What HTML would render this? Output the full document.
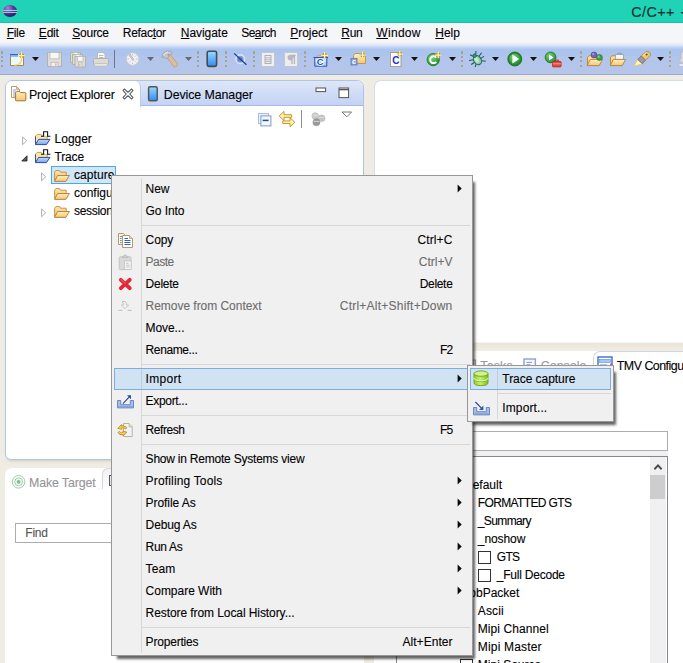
<!DOCTYPE html>
<html><head><meta charset="utf-8"><title>C/C++ - Eclipse</title>
<style>
html,body{margin:0;padding:0}
body{width:683px;height:663px;overflow:hidden;position:relative;background:#EFEDE3;font-family:"Liberation Sans",sans-serif;font-size:12px}
div,span,svg{position:absolute;box-sizing:border-box}
.t{white-space:nowrap;line-height:16px;height:16px;-webkit-text-stroke:0.1px currentColor}
u{text-decoration:underline;text-underline-offset:1px}
#title{left:0;top:0;width:683px;height:23px;background:#20D3B6}
#menubar{left:0;top:23px;width:683px;height:19px;background:#F5F6F7}
#toolbar{left:0;top:42px;width:683px;height:33px;background:linear-gradient(#F0F3FB 0px,#E3E9F8 3px,#C4D5F3 5px,#ABC5EF 7.5px,#AAC4EE 12px,#B3C5EC 15px,#B6C6EA 32px);border-bottom:1px solid #98A8D4}
/* panels */
#pe{left:5px;top:80px;width:359px;height:380px;background:#fff;border:1px solid #B2C2EA;border-radius:7px 7px 6px 6px;overflow:hidden;box-shadow:0 3px 3px -2px rgba(140,130,90,.3)}
#pehead{left:0;top:0;width:357px;height:25px;background:linear-gradient(#DEE7F9,#C3D3F4);border-bottom:1px solid #A7B9E6}
#petab{left:0;top:0;width:135px;height:26px;background:#fff;border-right:1px solid #B9C9EC;border-radius:0 6px 0 0}
#ed{left:374px;top:80px;width:320px;height:263px;background:#fff;border:1px solid #D3DCF0;border-bottom-color:#F4F4F2;border-radius:7px 0 0 0}
#mt{left:5px;top:468px;width:359px;height:210px;background:#fff;border-radius:7px 7px 0 0}
#br{left:374px;top:351px;width:320px;height:330px;background:#fff}
#brhead{left:0;top:0;width:320px;height:25px;background:linear-gradient(#fff 60%,#F6F6F6)}
#brtab{left:219px;top:0;width:120px;height:26px;background:#fff;border:1px solid #D0D5E2;border-bottom:none;border-radius:7px 0 0 0}
.inp{background:#fff;border:1px solid #ABADB3}
/* menus */
.menu{background:#F0F0F0;border:1px solid #979797;box-shadow:4px 5px 2.5px -2px rgba(0,0,0,.62)}
.sep{height:1px;background:#D7D7D7}
.gut{width:1px;background:#D7D7D7}
.hl{background:#D1E2F2;border:1px solid #78AEE5}
.arr{left:457px;width:0;height:0;border-left:4.3px solid #111;border-top:3.7px solid transparent;border-bottom:3.7px solid transparent}
.dd{width:0;height:0;border-top:4px solid #111;border-left:4px solid transparent;border-right:4px solid transparent}
.hd{width:2px;height:2px;background:#A9A28C}
.cb{width:13px;height:13px;background:#fff;border:1px solid #333}

</style></head>
<body>
<div id="title"></div><div style="left:0;top:22px;width:683px;height:1px;background:#1BC2A6"></div>
<svg style="left:2px;top:4px" width="16" height="14" viewBox="0 0 16 14"><defs><radialGradient id="eg" cx="0.35" cy="0.25" r="0.8"><stop offset="0" stop-color="#9C8CD2"/><stop offset="0.5" stop-color="#4A3C96"/><stop offset="1" stop-color="#241A6A"/></radialGradient></defs><ellipse cx="8" cy="7" rx="7.1" ry="6" fill="url(#eg)"/><path d="M1.2 4.6Q0.6 7 1.4 9.4" fill="none" stroke="#E88CB4" stroke-width="0.9" stroke-opacity="0.8"/><rect x="1.3" y="5.9" width="13.9" height="1" fill="#C2C9EE"/><rect x="1.3" y="7.9" width="13.9" height="1" fill="#C2C9EE"/></svg>
<div id="menubar"></div>
<div id="toolbar"></div>
<svg width="0" height="0" style="left:0;top:0"><defs>
<linearGradient id="gBlue" x1="0" y1="0" x2="0" y2="1"><stop offset="0" stop-color="#9AD8FF"/><stop offset="1" stop-color="#2E8CF2"/></linearGradient>
<linearGradient id="gFold" x1="0" y1="0" x2="0" y2="1"><stop offset="0" stop-color="#FEF0C4"/><stop offset="1" stop-color="#F3C673"/></linearGradient>
<linearGradient id="gFoldB" x1="0" y1="0" x2="0" y2="1"><stop offset="0" stop-color="#FCE7B2"/><stop offset="1" stop-color="#F0BF68"/></linearGradient>
<linearGradient id="gFlap" x1="0" y1="0" x2="0" y2="1"><stop offset="0" stop-color="#C4DBFA"/><stop offset="1" stop-color="#79A6E8"/></linearGradient>
<radialGradient id="gGreen" cx="0.4" cy="0.35" r="0.7"><stop offset="0" stop-color="#7FD27A"/><stop offset="1" stop-color="#1E8A2A"/></radialGradient>
<linearGradient id="gDb" x1="0" y1="0" x2="1" y2="0"><stop offset="0" stop-color="#8CCB2E"/><stop offset="0.45" stop-color="#C6F070"/><stop offset="1" stop-color="#7DBE22"/></linearGradient>
</defs></svg>
<div class="hd" style="left:1px;top:51px;height:3px"></div><div class="hd" style="left:1px;top:56px;height:2px"></div><div class="hd" style="left:1px;top:60px;height:2px"></div><div class="hd" style="left:1px;top:65px;height:2px"></div>
<svg style="left:9px;top:51px" width="17" height="16" viewBox="0 0 17 16"><path d="M1.5 3.2V14.5H14.5V3.2" fill="#ECFAFF" stroke="#A88A44" stroke-width="1"/><rect x="1" y="3" width="8" height="1.4" fill="#2C68C4"/><rect x="1" y="4.4" width="8" height="1.3" fill="#6FA6EA"/><path d="M12.6 7.5C12.6 12 9.5 14.2 5.5 14.4" fill="none" stroke="#F6CE58" stroke-width="1.1"/><path d="M12.5 1.2000000000000002L15.8 4.5L12.5 7.8L9.2 4.5Z" fill="#C28E14"/><path d="M12.5 1.2000000000000002V7.8M9.2 4.5H15.8" stroke="#FFF4B4" stroke-width="1.25"/></svg>
<svg style="left:32px;top:57px" width="7" height="4" viewBox="0 0 7 4"><path d="M0 0H7L3.5 4Z" fill="#111"/></svg>
<svg style="left:46px;top:51px" width="17" height="17" viewBox="0 0 17 17"><path d="M1.5 1.5h14v14h-14z" fill="#DFDDD8" stroke="#B3B1AA"/><rect x="4.0" y="1.5" width="9" height="6.3" fill="#F8F8F6" stroke="#BEBCB5" stroke-width="0.8"/><rect x="5.0" y="11.3" width="7" height="4.2" fill="#F3F2EE" stroke="#B9B7B0" stroke-width="0.8"/><rect x="9.0" y="12.3" width="1.6" height="2.6" fill="#C9C7C0"/></svg>
<svg style="left:69px;top:51px" width="18" height="17" viewBox="0 0 18 17"><path d="M1.5 1.5h10v10h-10z" fill="#DFDDD8" stroke="#B3B1AA"/><rect x="4.0" y="1.5" width="5" height="4.5" fill="#F8F8F6" stroke="#BEBCB5" stroke-width="0.8"/><rect x="5.0" y="7.3" width="3" height="4.2" fill="#F3F2EE" stroke="#B9B7B0" stroke-width="0.8"/><rect x="5.0" y="8.3" width="1.6" height="2.6" fill="#C9C7C0"/><path d="M3.5 3.5h10v10h-10z" fill="#DFDDD8" stroke="#B3B1AA"/><rect x="6.0" y="3.5" width="5" height="4.5" fill="#F8F8F6" stroke="#BEBCB5" stroke-width="0.8"/><rect x="7.0" y="9.3" width="3" height="4.2" fill="#F3F2EE" stroke="#B9B7B0" stroke-width="0.8"/><rect x="7.0" y="10.3" width="1.6" height="2.6" fill="#C9C7C0"/><path d="M6 5.5h10.5v10.5h-10.5z" fill="#DFDDD8" stroke="#B3B1AA"/><rect x="8.5" y="5.5" width="5.5" height="4.7250000000000005" fill="#F8F8F6" stroke="#BEBCB5" stroke-width="0.8"/><rect x="9.5" y="11.8" width="3.5" height="4.2" fill="#F3F2EE" stroke="#B9B7B0" stroke-width="0.8"/><rect x="10.0" y="12.8" width="1.6" height="2.6" fill="#C9C7C0"/></svg>
<svg style="left:92px;top:51px" width="18" height="17" viewBox="0 0 18 17"><path d="M5.5 8V1.5H11L13 3.5V8Z" fill="#FCFCFA" stroke="#B9B7B0" stroke-width="0.9"/><path d="M7 4.5h4.4M7 6.5h4.4" stroke="#B4B2AC" stroke-width="0.9"/><rect x="1.5" y="7.5" width="15" height="6" rx="1.2" fill="#DDDBD5" stroke="#B3B1AA"/><rect x="2.6" y="12.6" width="12.8" height="2.6" rx="0.8" fill="#EDECE8" stroke="#B9B7B0" stroke-width="0.8"/></svg>
<div style="left:114px;top:50px;width:1px;height:18px;background:#6E7488"></div>
<svg style="left:125px;top:51px" width="16" height="16" viewBox="0 0 16 16"><circle cx="7.6" cy="8" r="6.3" fill="#F1F1F4" stroke="#C9CAD2" stroke-width="1"/><path d="M7.6 3v1.4M7.6 11.6V13M2.6 8H4M11.2 8h1.4M4.2 4.6l1 1M10 10.4l1 1M11 4.6l-1 1M4.2 11.4l1-1" stroke="#B5B6BE" stroke-width="0.9"/><path d="M4.4 3.4L8.6 9.4" stroke="#A9AAB3" stroke-width="1.9"/><path d="M4.7 3.8L8.3 9" stroke="#EDEDF0" stroke-width="0.7"/></svg>
<svg style="left:147px;top:57px" width="7" height="4" viewBox="0 0 7 4"><path d="M0 0H7L3.5 4Z" fill="#666A78"/></svg>
<svg style="left:161px;top:50px" width="18" height="18" viewBox="0 0 18 18"><path d="M5.6 6.8L9.2 4.4L16.4 13.6Q17 16 15 16.8L12.6 16.6Z" fill="#DDBD98" stroke="#B8946A" stroke-width="0.7"/><path d="M0.8 7Q1.4 2.6 6.4 1Q10 0.4 11.4 2.6L9.4 5Q8 3.8 6.6 4.8L8 6.6L5 9L3.4 6.8Q2.2 6.6 1.6 8Z" fill="#C6C9D1" stroke="#9497A2" stroke-width="0.7"/><path d="M2.4 5Q4 2.6 7 2" fill="none" stroke="#ECEEF2" stroke-width="1"/></svg>
<svg style="left:185px;top:57px" width="7" height="4" viewBox="0 0 7 4"><path d="M0 0H7L3.5 4Z" fill="#666A78"/></svg>
<div class="hd" style="left:197px;top:51px;height:3px"></div><div class="hd" style="left:197px;top:56px;height:2px"></div><div class="hd" style="left:197px;top:60px;height:2px"></div><div class="hd" style="left:197px;top:65px;height:2px"></div>
<svg style="left:206px;top:50px" width="12" height="18" viewBox="0 0 12 18"><rect x="1.2" y="1.2" width="9.4" height="15.2" rx="1.6" fill="url(#gBlue)" stroke="#4A4A4E" stroke-width="1.6"/></svg>
<div class="hd" style="left:225px;top:51px;height:3px"></div><div class="hd" style="left:225px;top:56px;height:2px"></div><div class="hd" style="left:225px;top:60px;height:2px"></div><div class="hd" style="left:225px;top:65px;height:2px"></div>
<svg style="left:233px;top:52px" width="15" height="14" viewBox="0 0 15 14"><circle cx="7.2" cy="7.2" r="4.3" fill="#7F9FD6" stroke="#D9E2F4" stroke-width="1.6"/><circle cx="7.2" cy="7.2" r="2.2" fill="#5C82C4"/><path d="M1.2 1.4L13.4 12.8" stroke="#1C3FA0" stroke-width="1.3"/></svg>
<div class="hd" style="left:253px;top:51px;height:3px"></div><div class="hd" style="left:253px;top:56px;height:2px"></div><div class="hd" style="left:253px;top:60px;height:2px"></div><div class="hd" style="left:253px;top:65px;height:2px"></div>
<svg style="left:261px;top:52px" width="14" height="15" viewBox="0 0 14 15"><rect x="0.5" y="0.5" width="13" height="14" fill="#F0F0F2" stroke="#C6C7CE"/><rect x="4" y="3.5" width="6" height="8" fill="none" stroke="#A9AAB2" stroke-width="0.9"/><path d="M4 5.8h6M4 7.8h6M4 9.6h6" stroke="#A9AAB2" stroke-width="0.8"/></svg>
<svg style="left:284px;top:52px" width="14" height="15" viewBox="0 0 14 15"><rect x="0.5" y="0.5" width="13" height="14" fill="#EDEDEF" stroke="#C6C7CE"/><path d="M8 3.2V12M10.4 3.2V12M11.6 3.4H7Q4.2 3.4 4.2 5.6Q4.2 7.8 7.4 7.8" fill="#B9BAC1" stroke="#B4B5BC" stroke-width="1.3"/></svg>
<div class="hd" style="left:304px;top:51px;height:3px"></div><div class="hd" style="left:304px;top:56px;height:2px"></div><div class="hd" style="left:304px;top:60px;height:2px"></div><div class="hd" style="left:304px;top:65px;height:2px"></div>
<svg style="left:313px;top:51px" width="16" height="16" viewBox="0 0 16 16"><path d="M3.6 6.2L4.4 4.4H8L8.8 6.2Z" fill="#F2C2A8" stroke="#C08A78" stroke-width="0.6"/><path d="M0.7 6.5H15L13.8 7.6V15.2H1.8V7.6Z" fill="#A9CDF8" stroke="#2A52C0" stroke-width="1"/><path d="M2.6 8H13V11H2.6Z" fill="#CDE4FF"/><text x="7.2" y="14.3" font-family="Liberation Sans,sans-serif" font-size="9.5" font-weight="bold" fill="#fff" stroke="#fff" stroke-width="1.6" text-anchor="middle">C</text><text x="7.2" y="14.3" font-family="Liberation Sans,sans-serif" font-size="9.5" font-weight="bold" fill="#185AA8" text-anchor="middle">C</text><path d="M11.6 1.1000000000000005L14.899999999999999 4.4L11.6 7.7L8.3 4.4Z" fill="#C28E14"/><path d="M11.6 1.1000000000000005V7.7M8.3 4.4H14.899999999999999" stroke="#FFF4B4" stroke-width="1.25"/></svg>
<svg style="left:335px;top:57px" width="7" height="4" viewBox="0 0 7 4"><path d="M0 0H7L3.5 4Z" fill="#111"/></svg>
<svg style="left:350px;top:51px" width="17" height="16" viewBox="0 0 17 16"><path d="M3.5 4.5L5 2.5H9.5L10.5 4H15.5V12.5H3.5Z" fill="url(#gFold)" stroke="#C0903C" stroke-width="0.9"/><rect x="1" y="7.5" width="6" height="6.5" fill="#86A6DE" stroke="#5878BC" stroke-width="0.8"/><text x="4" y="13" font-family="Liberation Sans,sans-serif" font-size="7" font-weight="bold" fill="#fff" text-anchor="middle">c</text><path d="M12.6 0.7999999999999998L15.8 4L12.6 7.2L9.399999999999999 4Z" fill="#C28E14"/><path d="M12.6 0.7999999999999998V7.2M9.399999999999999 4H15.8" stroke="#FFF4B4" stroke-width="1.25"/></svg>
<svg style="left:373px;top:57px" width="7" height="4" viewBox="0 0 7 4"><path d="M0 0H7L3.5 4Z" fill="#111"/></svg>
<svg style="left:389px;top:50px" width="15" height="18" viewBox="0 0 15 18"><rect x="1.5" y="2.5" width="10.5" height="14" fill="#FAFAFF" stroke="#A9A090"/><text x="6.8" y="14" font-family="Liberation Sans,sans-serif" font-size="10" font-weight="bold" fill="#2334B8" text-anchor="middle">C</text><path d="M10.8 0.7999999999999998L14.0 4L10.8 7.2L7.6000000000000005 4Z" fill="#C28E14"/><path d="M10.8 0.7999999999999998V7.2M7.6000000000000005 4H14.0" stroke="#FFF4B4" stroke-width="1.25"/></svg>
<svg style="left:411px;top:57px" width="7" height="4" viewBox="0 0 7 4"><path d="M0 0H7L3.5 4Z" fill="#111"/></svg>
<svg style="left:426px;top:51px" width="16" height="16" viewBox="0 0 16 16"><circle cx="7.2" cy="8.6" r="6.2" fill="url(#gGreen)" stroke="#1F7A2A" stroke-width="0.8"/><path d="M10.2 6.6A3.4 3.4 0 1 0 10.2 10.8" fill="none" stroke="#fff" stroke-width="2"/><path d="M12.2 0.7999999999999998L15.399999999999999 4L12.2 7.2L9.0 4Z" fill="#C28E14"/><path d="M12.2 0.7999999999999998V7.2M9.0 4H15.399999999999999" stroke="#FFF4B4" stroke-width="1.25"/></svg>
<svg style="left:448.5px;top:57px" width="7" height="4" viewBox="0 0 7 4"><path d="M0 0H7L3.5 4Z" fill="#111"/></svg>
<div class="hd" style="left:461px;top:51px;height:3px"></div><div class="hd" style="left:461px;top:56px;height:2px"></div><div class="hd" style="left:461px;top:60px;height:2px"></div><div class="hd" style="left:461px;top:65px;height:2px"></div>
<svg style="left:469px;top:51px" width="17" height="16" viewBox="0 0 17 16"><g transform="rotate(-32 8 8.4)"><path d="M4.5 0.8L6.4 3.6M11.5 0.8L9.6 3.6M0.6 5.2L4.6 6.8M15.4 5.2L11.4 6.8M0.4 9.6H4.2M15.6 9.6H11.8M1.6 14.6L5 11.8M14.4 14.6L11 11.8" stroke="#1F5A52" stroke-width="1.05" fill="none"/><ellipse cx="8" cy="9.2" rx="3.7" ry="4.9" fill="#8CCBA8" stroke="#1E6458" stroke-width="1"/><ellipse cx="7.4" cy="8.6" rx="1.9" ry="3" fill="#C4EACC"/><circle cx="8" cy="4" r="1.8" fill="#3E8C7C" stroke="#1E6458" stroke-width="0.8"/></g></svg>
<svg style="left:492px;top:57px" width="7" height="4" viewBox="0 0 7 4"><path d="M0 0H7L3.5 4Z" fill="#111"/></svg>
<svg style="left:507px;top:51px" width="16" height="16" viewBox="0 0 16 16"><circle cx="7.8" cy="8" r="7" fill="#1F8A2C" stroke="#176A22" stroke-width="0.8"/><circle cx="7.8" cy="8" r="5.6" fill="url(#gGreen)"/><path d="M5.4 3.4L12.2 8L5.4 12.6Z" fill="#fff"/></svg>
<svg style="left:530px;top:57px" width="7" height="4" viewBox="0 0 7 4"><path d="M0 0H7L3.5 4Z" fill="#111"/></svg>
<svg style="left:544px;top:51px" width="18" height="17" viewBox="0 0 18 17"><circle cx="6.6" cy="6.4" r="5.4" fill="url(#gGreen)" stroke="#1B7526" stroke-width="0.9"/><path d="M5 3.4L9.6 6.4L5 9.6Z" fill="#fff"/><rect x="8.5" y="10.5" width="8.6" height="5.4" rx="0.8" fill="#E0483C" stroke="#B02A20" stroke-width="0.8"/><path d="M11 10.4V9.2H14.6V10.4" fill="none" stroke="#B02A20" stroke-width="1"/><path d="M8.6 12.8H17" stroke="#F6B0A8" stroke-width="0.8"/></svg>
<svg style="left:568px;top:57px" width="7" height="4" viewBox="0 0 7 4"><path d="M0 0H7L3.5 4Z" fill="#111"/></svg>
<div class="hd" style="left:580px;top:51px;height:3px"></div><div class="hd" style="left:580px;top:56px;height:2px"></div><div class="hd" style="left:580px;top:60px;height:2px"></div><div class="hd" style="left:580px;top:65px;height:2px"></div>
<svg style="left:586px;top:50px" width="18" height="17" viewBox="0 0 18 17"><path d="M1.5 15V7.2L3 5.8H7L8 7.2H13.6V9" fill="url(#gFoldB)" stroke="#B8802E" stroke-width="0.9"/><path d="M4.4 9.4H16.6L13.2 15.6H1.2Z" fill="url(#gFold)" stroke="#B8802E" stroke-width="0.9"/><circle cx="8" cy="5" r="3" fill="#7A5FC0" stroke="#4B3890" stroke-width="0.6"/><circle cx="7.2" cy="4.2" r="1.1" fill="#A896DC"/><circle cx="13.4" cy="7.5" r="3" fill="#3FA048" stroke="#1F7028" stroke-width="0.6"/><circle cx="12.6" cy="6.7" r="1.1" fill="#86CE8C"/></svg>
<svg style="left:609px;top:51px" width="18" height="16" viewBox="0 0 18 16"><path d="M1.5 13.5V6.2L3 4.8H7L8 6.2H13.6V8" fill="url(#gFoldB)" stroke="#B8802E" stroke-width="0.9"/><path d="M8.6 3.4V2.2H12.4V3.4" fill="none" stroke="#8C98A8" stroke-width="0.9"/><rect x="6.6" y="3.5" width="7.8" height="5" fill="#F6F8FF" stroke="#98A4BC" stroke-width="0.9"/><path d="M4.4 8.4H16.6L13.2 14.6H1.2Z" fill="url(#gFold)" stroke="#B8802E" stroke-width="0.9"/></svg>
<svg style="left:633px;top:50px" width="19" height="18" viewBox="0 0 19 18"><path d="M1 15.9L4.8 9.6L9.6 14Z" fill="#FFF6B8" stroke="#EEC85A" stroke-width="0.8"/><path d="M4.8 9.4L8.4 5.8L12.6 10L9.4 13.8Z" fill="#9A9AA2" stroke="#6A6A74" stroke-width="0.8"/><path d="M8.4 5.8L13.2 1.6Q15 0.9 16.6 2.4Q18 4.2 17.2 5.8L12.6 10Z" fill="#F3C56C" stroke="#B8802E" stroke-width="0.8"/><path d="M10 5.6L13.8 2.4" stroke="#FBE2A8" stroke-width="1.2"/><circle cx="13.6" cy="4.6" r="1" fill="#2F55C0"/></svg>
<svg style="left:657px;top:57px" width="7" height="4" viewBox="0 0 7 4"><path d="M0 0H7L3.5 4Z" fill="#111"/></svg>
<div class="hd" style="left:669px;top:51px;height:3px"></div><div class="hd" style="left:669px;top:56px;height:2px"></div><div class="hd" style="left:669px;top:60px;height:2px"></div><div class="hd" style="left:669px;top:65px;height:2px"></div>
<svg style="left:678px;top:51px" width="6" height="17" viewBox="0 0 6 17"><path d="M3 1H9V8H12L6 13.6L0.4 8H3Z" fill="#DDDEE4" stroke="#B9BAC2" stroke-width="0.9"/><rect x="1" y="12.6" width="10" height="3" fill="#E8E8EC" stroke="#B9BAC2" stroke-width="0.8"/></svg>

<div id="pe"><div id="pehead"></div><div id="petab"></div></div>
<div id="ed"></div>
<div id="band" style="left:374px;top:343px;width:309px;height:8px;background:linear-gradient(#E9E5D9,#F1EEE5)"></div>
<div id="mt"></div>
<div style="left:102px;top:468px;width:40px;height:21px;background:linear-gradient(#F1F1F4,#fff);border-left:1px solid #D6D6DE;border-top:1px solid #D6D6DE;border-radius:6px 0 0 0"></div>
<div style="left:108.5px;top:475px;width:8px;height:11px;background:#E8E8EE;border:1.5px solid #55555F"></div>
<div class="inp" style="left:15px;top:523px;width:200px;height:20px"></div>
<div id="br"><div id="brhead"></div><div id="brtab"></div></div>
<div class="inp" style="left:420px;top:431px;width:248px;height:20px"></div>
<div style="left:396px;top:451px;width:272px;height:6px;background:#F0F0F0"></div>
<div class="inp" style="left:396px;top:456px;width:272px;height:230px;border-color:#828790"></div>
<div style="left:650px;top:457px;width:16px;height:210px;background:#F0F0F0"></div>
<div style="left:650px;top:475px;width:15px;height:24px;background:#CDCDCD"></div>
<svg style="left:652.5px;top:463px" width="10" height="8" viewBox="0 0 10 8"><path d="M1.4 6.2 L5 2.4 L8.6 6.2" fill="none" stroke="#4A4A4A" stroke-width="2"/></svg>
<div class="cb" style="left:478px;top:551px"></div>
<div class="cb" style="left:478px;top:569px"></div>
<div class="cb" style="left:460px;top:659px"></div>
<div class="hl" style="left:51px;top:166px;width:65px;height:18px;background:#D1E6F6;border-color:#4CA9E8"></div>
<svg style="left:22px;top:136px" width="6" height="10" viewBox="0 0 6 10"><path d="M0.6 0.9V8.7L4.6 4.8Z" fill="#fff" stroke="#A5A5A5" stroke-width="0.9"/></svg>
<svg style="left:20.5px;top:154.5px" width="7" height="7" viewBox="0 0 7 7"><path d="M6 0.8V6H0.8Z" fill="#595959" stroke="#262626" stroke-width="0.9"/></svg>
<svg style="left:41px;top:172px" width="6" height="10" viewBox="0 0 6 10"><path d="M0.6 0.9V8.7L4.6 4.8Z" fill="#fff" stroke="#A5A5A5" stroke-width="0.9"/></svg>
<svg style="left:41px;top:208px" width="6" height="10" viewBox="0 0 6 10"><path d="M0.6 0.9V8.7L4.6 4.8Z" fill="#fff" stroke="#A5A5A5" stroke-width="0.9"/></svg>
<svg style="left:34px;top:130.5px" width="17" height="15" viewBox="0 0 17 15"><path d="M1.5 12.5V5.2L3.2 3.4H7.2L8.4 5H13.2V8" fill="#FBE6A6" stroke="#B89A5A" stroke-width="0.9"/><path d="M1.5 5.4V13.2" stroke="#3A4FA6" stroke-width="1"/><path d="M4.6 8.4H16L12.4 13.6H1.4Z" fill="url(#gFlap)" stroke="#2D4BA6" stroke-width="1"/><path d="M10 0.9H13.4V5H10Z" fill="#fff"/><path d="M7 5.3H9.6V0.8H13.6V5.3H16.4" fill="none" stroke="#151515" stroke-width="1.1"/></svg>
<svg style="left:34px;top:148.5px" width="17" height="15" viewBox="0 0 17 15"><path d="M1.5 12.5V5.2L3.2 3.4H7.2L8.4 5H13.2V8" fill="#FBE6A6" stroke="#B89A5A" stroke-width="0.9"/><path d="M1.5 5.4V13.2" stroke="#3A4FA6" stroke-width="1"/><path d="M4.6 8.4H16L12.4 13.6H1.4Z" fill="url(#gFlap)" stroke="#2D4BA6" stroke-width="1"/><path d="M10 0.9H13.4V5H10Z" fill="#fff"/><path d="M7 5.3H9.6V0.8H13.6V5.3H16.4" fill="none" stroke="#151515" stroke-width="1.1"/></svg>
<svg style="left:54px;top:170px" width="16" height="12" viewBox="0 0 16 12"><path d="M0.6 10.6V2.2L1.8 0.6H5.6L6.6 2.2H12.2V5.4" fill="url(#gFoldB)" stroke="#BE8A3E" stroke-width="0.9"/><path d="M3.6 5.5H15.4L11.8 11.4H0.6Z" fill="url(#gFold)" stroke="#B9792E" stroke-width="0.9"/></svg>
<svg style="left:54px;top:188px" width="16" height="12" viewBox="0 0 16 12"><path d="M0.6 10.6V2.2L1.8 0.6H5.6L6.6 2.2H12.2V5.4" fill="url(#gFoldB)" stroke="#BE8A3E" stroke-width="0.9"/><path d="M3.6 5.5H15.4L11.8 11.4H0.6Z" fill="url(#gFold)" stroke="#B9792E" stroke-width="0.9"/></svg>
<svg style="left:54px;top:206px" width="16" height="12" viewBox="0 0 16 12"><path d="M0.6 10.6V2.2L1.8 0.6H5.6L6.6 2.2H12.2V5.4" fill="url(#gFoldB)" stroke="#BE8A3E" stroke-width="0.9"/><path d="M3.6 5.5H15.4L11.8 11.4H0.6Z" fill="url(#gFold)" stroke="#B9792E" stroke-width="0.9"/></svg>
<svg style="left:10px;top:85px" width="17" height="17" viewBox="0 0 17 17"><path d="M1.5 1.5H6.5L9.5 4.5V12.5H1.5Z" fill="#FFFEF6" stroke="#A6966A" stroke-width="0.9"/><path d="M6.5 1.5V4.5H9.5Z" fill="#E4D6A6" stroke="#A6966A" stroke-width="0.6"/><path d="M3 5h3M3 7h3.4M3 9h2M3 11h2" stroke="#7C97D6" stroke-width="0.9"/><path d="M5.6 15.2V7.6L6.8 6.4H9.4L10.4 7.6H15Q15.8 7.6 15.8 8.4V15.2Q15.8 15.8 15 15.8H6.4Q5.6 15.8 5.6 15.2Z" fill="url(#gFold)" stroke="#B46E28" stroke-width="1"/></svg>
<svg style="left:122px;top:88px" width="12" height="12" viewBox="0 0 12 12"><path d="M1 2.4L2.4 1L6 4.2L9.6 1L11 2.4L7.8 6L11 9.6L9.6 11L6 7.8L2.4 11L1 9.6L4.2 6Z" fill="#fff" stroke="#5C5C5C" stroke-width="1.05"/></svg>
<svg style="left:147px;top:85px" width="12" height="18" viewBox="0 0 12 18"><rect x="1.6" y="1.8" width="8.6" height="14" rx="1.4" fill="url(#gBlue)" stroke="#56565A" stroke-width="1.5"/></svg>
<svg style="left:315px;top:87px" width="12" height="6" viewBox="0 0 12 6"><rect x="1" y="1" width="9.6" height="3.6" fill="#fff" stroke="#555" stroke-width="1"/></svg>
<svg style="left:338px;top:87px" width="12" height="12" viewBox="0 0 12 12"><rect x="1" y="1" width="9.6" height="9.6" fill="#fff" stroke="#555" stroke-width="1"/><path d="M1 2.6H10.6" stroke="#555" stroke-width="1.4"/></svg>
<svg style="left:257px;top:112px" width="15" height="15" viewBox="0 0 15 15"><rect x="1.5" y="1.5" width="10" height="10" fill="#E8F1FB" stroke="#A9BCE0"/><rect x="3.9" y="3.9" width="10" height="10" fill="#F2F9FE" stroke="#7E97CC"/><path d="M5.6 8.4H11.6" stroke="#1C4A9C" stroke-width="1.5"/></svg>
<svg style="left:278px;top:110px" width="18" height="18" viewBox="0 0 18 18"><path d="M1.2 6L6 1.4V4.7H13.6V7.3H6V10.6Z" fill="#FFF0B4" stroke="#C88A12" stroke-width="0.9"/><path d="M16.8 12.2L12 7.6V10.9H4.8V13.5H12V16.8Z" fill="#FFF0B4" stroke="#C88A12" stroke-width="0.9"/></svg>
<div style="left:301px;top:110px;width:1px;height:18px;background:#8F8F8F"></div>
<svg style="left:311px;top:112px" width="15" height="15" viewBox="0 0 15 15"><circle cx="4.2" cy="4" r="3.3" fill="#CDCDCD" stroke="#B4B4B4" stroke-width="0.6"/><circle cx="10.7" cy="6.3" r="3.3" fill="#C6C6C6" stroke="#B0B0B0" stroke-width="0.6"/><circle cx="5.4" cy="10.2" r="3.5" fill="#9C9C9C" stroke="#888" stroke-width="0.6"/><path d="M2.2 9.4H8.6M1.4 3.2H7M8 5.5H13.4" stroke="#E0E0E0" stroke-width="0.8"/></svg>
<svg style="left:341px;top:111px" width="12" height="7" viewBox="0 0 12 7"><path d="M1 1H10.6L5.8 5.8Z" fill="#fff" stroke="#6A6A6A" stroke-width="0.9"/></svg><svg style="left:11px;top:474px" width="16" height="16" viewBox="0 0 16 16"><circle cx="7.6" cy="7.8" r="6.3" fill="#fff" stroke="#8FC6A0" stroke-width="0.9"/><circle cx="7.6" cy="7.8" r="3.9" fill="#F2FAF4" stroke="#8FC6A0" stroke-width="0.9"/><circle cx="7.6" cy="7.8" r="1.9" fill="#7EBE92"/></svg>
<svg style="left:523px;top:358px" width="14" height="14" viewBox="0 0 14 14"><rect x="1" y="1" width="11.4" height="10.6" fill="#F4F7FD" stroke="#8AA2D6" stroke-width="1.4"/><path d="M3.6 4.4H9M3.6 6.8H7.4" stroke="#8C98B4" stroke-width="1"/></svg>
<svg style="left:470px;top:358px" width="8" height="14" viewBox="0 0 8 14"><rect x="-4" y="2" width="9.6" height="11" fill="#EDE6D2" stroke="#B6A680" stroke-width="1"/><path d="M-2 6H4M-2 8.5H4" stroke="#AAA" stroke-width="0.8"/></svg>
<svg style="left:597px;top:356px" width="17" height="16" viewBox="0 0 17 16"><rect x="1" y="1" width="14" height="12.4" fill="#fff" stroke="#3B6FD0" stroke-width="1.4"/><rect x="2.6" y="3.4" width="10.8" height="3" fill="#A8C6F4" stroke="#5F8CE0" stroke-width="0.6"/><path d="M3 9H10M3 11H9" stroke="#5F8CE0" stroke-width="1"/><circle cx="14.2" cy="8.4" r="1.1" fill="#E23C8C"/></svg>
<span class="t" id="t0" style="font-size:12px;color:#000;top:24.5px;left:6.8px;letter-spacing:-0.340px;"><u>F</u>ile</span>
<span class="t" id="t1" style="font-size:12px;color:#000;top:24.5px;left:38.8px;letter-spacing:-0.176px;"><u>E</u>dit</span>
<span class="t" id="t2" style="font-size:12px;color:#000;top:24.5px;left:72.3px;letter-spacing:-0.258px;"><u>S</u>ource</span>
<span class="t" id="t3" style="font-size:12px;color:#000;top:24.5px;left:122.8px;letter-spacing:-0.297px;">Refac<u>t</u>or</span>
<span class="t" id="t4" style="font-size:12px;color:#000;top:24.5px;left:180.8px;letter-spacing:-0.047px;"><u>N</u>avigate</span>
<span class="t" id="t5" style="font-size:12px;color:#000;top:24.5px;left:241.3px;letter-spacing:-0.591px;">Se<u>a</u>rch</span>
<span class="t" id="t6" style="font-size:12px;color:#000;top:24.5px;left:290.3px;letter-spacing:-0.051px;"><u>P</u>roject</span>
<span class="t" id="t7" style="font-size:12px;color:#000;top:24.5px;left:341.3px;letter-spacing:-0.344px;"><u>R</u>un</span>
<span class="t" id="t8" style="font-size:12px;color:#000;top:24.5px;left:376.3px;letter-spacing:0.302px;"><u>W</u>indow</span>
<span class="t" id="t9" style="font-size:12px;color:#000;top:24.5px;left:435.3px;letter-spacing:-0.047px;"><u>H</u>elp</span>
<span class="t" id="t10" style="font-size:14.5px;color:#14302c;top:3.8px;left:631.3px;letter-spacing:0.3px;word-spacing:1.5px;">C/C++ -</span>
<span class="t" id="t40" style="font-size:12px;color:#000;top:130.5px;left:54.6px;letter-spacing:-0.029px;">Logger</span>
<span class="t" id="t41" style="font-size:12px;color:#000;top:148.5px;left:54.6px;letter-spacing:-0.187px;">Trace</span>
<span class="t" id="t42" style="font-size:12px;color:#000;top:166.5px;left:74px;letter-spacing:0.067px;">capture</span>
<span class="t" id="t43" style="font-size:12px;color:#000;top:184.5px;left:74px;">configuration</span>
<span class="t" id="t44" style="font-size:12px;color:#000;top:202.5px;left:74px;letter-spacing:-0.3px;">sessions</span>
<span class="t" id="t45" style="font-size:12.4px;color:#000;top:86.6px;left:29px;letter-spacing:-0.154px;">Project Explorer</span>
<span class="t" id="t46" style="font-size:12.4px;color:#000;top:86.6px;left:163.8px;letter-spacing:-0.088px;">Device Manager</span>
<span class="t" id="t47" style="font-size:12.4px;color:#959595;top:475.4px;left:29px;letter-spacing:-0.134px;">Make Target</span>
<span class="t" id="t48" style="font-size:12px;color:#555;top:525px;left:25.3px;letter-spacing:-0.211px;">Find</span>
<span class="t" id="t49" style="font-size:12.4px;color:#9a9a9a;top:357.5px;left:480.3px;letter-spacing:0.166px;">Tasks</span>
<span class="t" id="t50" style="font-size:12.4px;color:#9a9a9a;top:357.5px;left:540.8px;letter-spacing:0.004px;">Console</span>
<span class="t" id="t51" style="font-size:12.4px;color:#000;top:357.7px;left:616.8px;letter-spacing:-0.5px;">TMV Configuration</span>
<span class="t" id="t52" style="font-size:12px;color:#000;top:476.5px;left:464px;">Default</span>
<span class="t" id="t53" style="font-size:12px;color:#000;top:494.5px;left:477.8px;letter-spacing:-0.637px;">FORMATTED GTS</span>
<span class="t" id="t54" style="font-size:12px;color:#000;top:512.5px;left:477.8px;letter-spacing:-0.627px;">_Summary</span>
<span class="t" id="t55" style="font-size:12px;color:#000;top:530.5px;left:477.8px;letter-spacing:-0.078px;">_noshow</span>
<span class="t" id="t56" style="font-size:12px;color:#000;top:548.5px;left:496.8px;letter-spacing:-0.700px;">GTS</span>
<span class="t" id="t57" style="font-size:12px;color:#000;top:566.5px;left:496.8px;letter-spacing:-0.227px;">_Full Decode</span>
<span class="t" id="t58" style="font-size:12px;color:#000;top:584.5px;left:463.3px;">JobPacket</span>
<span class="t" id="t59" style="font-size:12px;color:#000;top:602.5px;left:477.8px;letter-spacing:0.131px;">Ascii</span>
<span class="t" id="t60" style="font-size:12px;color:#000;top:620.5px;left:477.8px;letter-spacing:0.079px;">Mipi Channel</span>
<span class="t" id="t61" style="font-size:12px;color:#000;top:638.5px;left:477.8px;letter-spacing:0.180px;">Mipi Master</span>
<span class="t" id="t62" style="font-size:12px;color:#000;top:657px;left:477.8px;">Mipi Source</span>

<div class="menu" style="left:111px;top:175px;width:362px;height:481px"></div>
<div class="gut" style="left:141px;top:178px;height:475px"></div>
<div class="sep" style="left:142px;top:225px;width:328px"></div>
<div class="sep" style="left:142px;top:364px;width:328px"></div>
<div class="sep" style="left:142px;top:415px;width:328px"></div>
<div class="sep" style="left:142px;top:444px;width:328px"></div>
<div class="sep" style="left:142px;top:627px;width:328px"></div>
<div class="hl" style="left:114px;top:368px;width:356px;height:22px"></div>
<div style="left:141px;top:369px;width:1px;height:20px;background:#BCCDE0"></div>
<svg style="left:456.5px;top:184px" width="6" height="9" viewBox="0 0 6 9"><path d="M0.6 0.4L4.7 4.5L0.6 8.6Z" fill="#0c0c0c"/></svg><svg style="left:456.5px;top:374px" width="6" height="9" viewBox="0 0 6 9"><path d="M0.6 0.4L4.7 4.5L0.6 8.6Z" fill="#0c0c0c"/></svg><svg style="left:456.5px;top:476px" width="6" height="9" viewBox="0 0 6 9"><path d="M0.6 0.4L4.7 4.5L0.6 8.6Z" fill="#0c0c0c"/></svg><svg style="left:456.5px;top:498px" width="6" height="9" viewBox="0 0 6 9"><path d="M0.6 0.4L4.7 4.5L0.6 8.6Z" fill="#0c0c0c"/></svg><svg style="left:456.5px;top:520px" width="6" height="9" viewBox="0 0 6 9"><path d="M0.6 0.4L4.7 4.5L0.6 8.6Z" fill="#0c0c0c"/></svg><svg style="left:456.5px;top:542px" width="6" height="9" viewBox="0 0 6 9"><path d="M0.6 0.4L4.7 4.5L0.6 8.6Z" fill="#0c0c0c"/></svg><svg style="left:456.5px;top:564px" width="6" height="9" viewBox="0 0 6 9"><path d="M0.6 0.4L4.7 4.5L0.6 8.6Z" fill="#0c0c0c"/></svg><svg style="left:456.5px;top:586px" width="6" height="9" viewBox="0 0 6 9"><path d="M0.6 0.4L4.7 4.5L0.6 8.6Z" fill="#0c0c0c"/></svg>
<svg style="left:117px;top:232px" width="17" height="17" viewBox="0 0 17 17"><path d="M1.5 1.5H6.5L8.5 3.5V12.5H1.5Z" fill="#FBF7E4" stroke="#A39460" stroke-width="0.9"/><path d="M3 4.5H6M3 6.5H4.6M3 8.5H4.6M3 10.5H4.6" stroke="#6C8AD0" stroke-width="1"/><path d="M5.5 3.5H12.5L15.5 6.5V15.5H5.5Z" fill="#FEFEFA" stroke="#A39460" stroke-width="0.9"/><path d="M12.5 3.5V6.5H15.5" fill="#E8DEB8" stroke="#A39460" stroke-width="0.7"/><path d="M7.5 6.5H11M7.5 8.5H13.5M7.5 10.5H13.5M7.5 12.5H13.5" stroke="#3C5FB8" stroke-width="1"/></svg>
<svg style="left:118px;top:254px" width="15" height="17" viewBox="0 0 15 17"><rect x="1.2" y="2.8" width="11.8" height="12.8" rx="1" fill="#D9D9D9" stroke="#C2C2C2" stroke-width="0.9"/><path d="M4.4 3.6V2.2H5.8Q6 0.8 7.1 0.8Q8.2 0.8 8.4 2.2H9.8V3.6Z" fill="#CFCFCF" stroke="#B9B9B9" stroke-width="0.7"/><rect x="6.6" y="7" width="6.6" height="8.6" fill="#F4F4F4" stroke="#C4C4C4" stroke-width="0.8"/><path d="M8 9.4H10.6M8 11.2H11.8M8 13H11.8" stroke="#C0C0C0" stroke-width="0.8"/></svg>
<svg style="left:118px;top:277px" width="15" height="14" viewBox="0 0 15 14"><path d="M2.9 2.9L11.7 11.1M11.7 2.9L2.9 11.1" stroke="#E3263A" stroke-width="3.9" stroke-linecap="round"/><path d="M3 2.6L7 6.4" stroke="#F4707C" stroke-width="1" stroke-linecap="round"/></svg>
<svg style="left:117px;top:300px" width="16" height="12" viewBox="0 0 16 12"><path d="M5.6 1.2Q9 0.8 9.4 3.6V5H11.6L8 8.6L4.4 5H6.6V3.6Q6.6 3 5.6 3Z" fill="#F4F4F4" stroke="#BDBDBD" stroke-width="0.9"/><path d="M1.4 10.4H5.4M10.6 10.4H14.6" stroke="#BDBDBD" stroke-width="1"/></svg>
<svg style="left:116px;top:393px" width="19" height="16" viewBox="0 0 19 16"><path d="M1.5 7.5h3.2v4.2h9.6v-4.2h3.2v7.4h-16z" fill="#A9BEE6" stroke="#5F80C0" stroke-width="0.9"/><path d="M2.5 13.4h14" stroke="#7F9AD4" stroke-width="0.8"/><path d="M7 10.6L14 3.2" stroke="#2A3F9C" stroke-width="1.1"/><path d="M11 2.2H15V6.2Z" fill="#2A4FA8"/></svg>
<svg style="left:117px;top:422px" width="17" height="16" viewBox="0 0 17 16"><path d="M6.5 1.5H12L15.2 4.8V14.5H6.5Z" fill="#EEF4FC" stroke="#B4AC8C" stroke-width="0.9"/><path d="M12 1.5V4.8H15.2" fill="#E4DCB8" stroke="#B4AC8C" stroke-width="0.7"/><path d="M9.4 6.6Q7 3.4 3.6 5" fill="none" stroke="#C08A1A" stroke-width="2.6"/><path d="M0.8 6.2L4.6 2.6L5 7.4Z" fill="#F2C84C" stroke="#C08A1A" stroke-width="0.8"/><path d="M9.2 6.4Q7 3.8 3.8 5.2" fill="none" stroke="#F8DC70" stroke-width="1.1"/><path d="M1.4 9.8Q3.8 13 7.2 11.4" fill="none" stroke="#C08A1A" stroke-width="2.6"/><path d="M10 10.2L6.2 13.8L5.8 9Z" fill="#F2C84C" stroke="#C08A1A" stroke-width="0.8"/><path d="M1.6 10Q3.8 12.6 7 11.2" fill="none" stroke="#F8DC70" stroke-width="1.1"/></svg>
<span class="t" id="t11" style="font-size:12px;color:#000;top:180.5px;left:145.6px;letter-spacing:-0.039px;">New</span>
<span class="t" id="t12" style="font-size:12px;color:#000;top:202.5px;left:145.6px;letter-spacing:-0.080px;">Go Into</span>
<span class="t" id="t13" style="font-size:12px;color:#000;top:231.5px;left:145.6px;letter-spacing:-0.129px;">Copy</span>
<span class="t" id="t14" style="font-size:12px;color:#000;top:231.5px;right:230.5px;letter-spacing:0.109px;">Ctrl+C</span>
<span class="t" id="t15" style="font-size:12px;color:#6d6d6d;top:253.5px;left:145.6px;letter-spacing:-0.517px;">Paste</span>
<span class="t" id="t16" style="font-size:12px;color:#6d6d6d;top:253.5px;right:230.5px;letter-spacing:0.002px;">Ctrl+V</span>
<span class="t" id="t17" style="font-size:12px;color:#000;top:275.5px;left:145.6px;letter-spacing:-0.265px;">Delete</span>
<span class="t" id="t18" style="font-size:12px;color:#000;top:275.5px;right:230.5px;letter-spacing:-0.315px;">Delete</span>
<span class="t" id="t19" style="font-size:12px;color:#6d6d6d;top:297.5px;left:145.6px;letter-spacing:-0.038px;">Remove from Context</span>
<span class="t" id="t20" style="font-size:12px;color:#6d6d6d;top:297.5px;right:230.5px;letter-spacing:0.227px;">Ctrl+Alt+Shift+Down</span>
<span class="t" id="t21" style="font-size:12px;color:#000;top:319.5px;left:145.6px;letter-spacing:-0.080px;">Move...</span>
<span class="t" id="t22" style="font-size:12px;color:#000;top:341.5px;left:145.6px;letter-spacing:-0.395px;">Rename...</span>
<span class="t" id="t23" style="font-size:12px;color:#000;top:341.5px;right:230.5px;letter-spacing:-0.700px;">F2</span>
<span class="t" id="t24" style="font-size:12px;color:#000;top:370.5px;left:145.6px;letter-spacing:0.297px;">Import</span>
<span class="t" id="t25" style="font-size:12px;color:#000;top:392.5px;left:145.6px;letter-spacing:-0.321px;">Export...</span>
<span class="t" id="t26" style="font-size:12px;color:#000;top:421.5px;left:145.6px;letter-spacing:-0.462px;">Refresh</span>
<span class="t" id="t27" style="font-size:12px;color:#000;top:421.5px;right:230.5px;letter-spacing:-0.700px;">F5</span>
<span class="t" id="t28" style="font-size:12px;color:#000;top:450.5px;left:145.6px;letter-spacing:-0.220px;">Show in Remote Systems view</span>
<span class="t" id="t29" style="font-size:12px;color:#000;top:472.5px;left:145.6px;letter-spacing:0.161px;">Profiling Tools</span>
<span class="t" id="t30" style="font-size:12px;color:#000;top:494.5px;left:145.6px;letter-spacing:-0.070px;">Profile As</span>
<span class="t" id="t31" style="font-size:12px;color:#000;top:516.5px;left:145.6px;letter-spacing:-0.131px;">Debug As</span>
<span class="t" id="t32" style="font-size:12px;color:#000;top:538.5px;left:145.6px;letter-spacing:-0.317px;">Run As</span>
<span class="t" id="t33" style="font-size:12px;color:#000;top:560.5px;left:145.6px;letter-spacing:0.064px;">Team</span>
<span class="t" id="t34" style="font-size:12px;color:#000;top:582.5px;left:145.6px;letter-spacing:-0.024px;">Compare With</span>
<span class="t" id="t35" style="font-size:12px;color:#000;top:604.5px;left:145.6px;letter-spacing:-0.081px;">Restore from Local History...</span>
<span class="t" id="t36" style="font-size:12px;color:#000;top:633.5px;left:145.6px;letter-spacing:-0.190px;">Properties</span>
<span class="t" id="t37" style="font-size:12px;color:#000;top:633.5px;right:230.5px;letter-spacing:0.033px;">Alt+Enter</span>

<div class="menu" style="left:467px;top:365px;width:147px;height:57px"></div>
<div class="gut" style="left:497px;top:368px;height:51px"></div>
<div class="sep" style="left:498px;top:393px;width:113px"></div>
<div class="hl" style="left:470px;top:368px;width:141px;height:22px"></div>
<div style="left:497px;top:369px;width:1px;height:20px;background:#BCCDE0"></div>
<svg style="left:473px;top:370px" width="16" height="17" viewBox="0 0 16 17"><path d="M1 3.6V12.8Q1 15.6 8 15.6Q15 15.6 15 12.8V3.6Z" fill="url(#gDb)" stroke="#6BA31E" stroke-width="0.9"/><ellipse cx="8" cy="3.6" rx="7" ry="2.7" fill="#D2F28C" stroke="#6BA31E" stroke-width="0.9"/><path d="M1 8Q1 10.8 8 10.8Q15 10.8 15 8" fill="none" stroke="#E4F8B0" stroke-width="1.3"/><path d="M1 8.9Q1 11.7 8 11.7Q15 11.7 15 8.9" fill="none" stroke="#7DB82A" stroke-width="0.7"/></svg>
<svg style="left:472px;top:400px" width="19" height="17" viewBox="0 0 19 17"><path d="M1.5 7.5h3.2v4.2h9.6v-4.2h3.2v7.4h-16z" fill="#A9BEE6" stroke="#5F80C0" stroke-width="0.9"/><path d="M2.5 13.4h14" stroke="#7F9AD4" stroke-width="0.8"/><path d="M3.4 2L10 8.6" stroke="#2A3F9C" stroke-width="1.1"/><path d="M11.4 5.6V10H7Z" fill="#2A5FB0"/></svg>
<span class="t" id="t38" style="font-size:12px;color:#000;top:370.5px;left:502.3px;letter-spacing:-0.046px;">Trace capture</span>
<span class="t" id="t39" style="font-size:12px;color:#000;top:399.5px;left:502.3px;letter-spacing:0.109px;">Import...</span>

</body></html>
